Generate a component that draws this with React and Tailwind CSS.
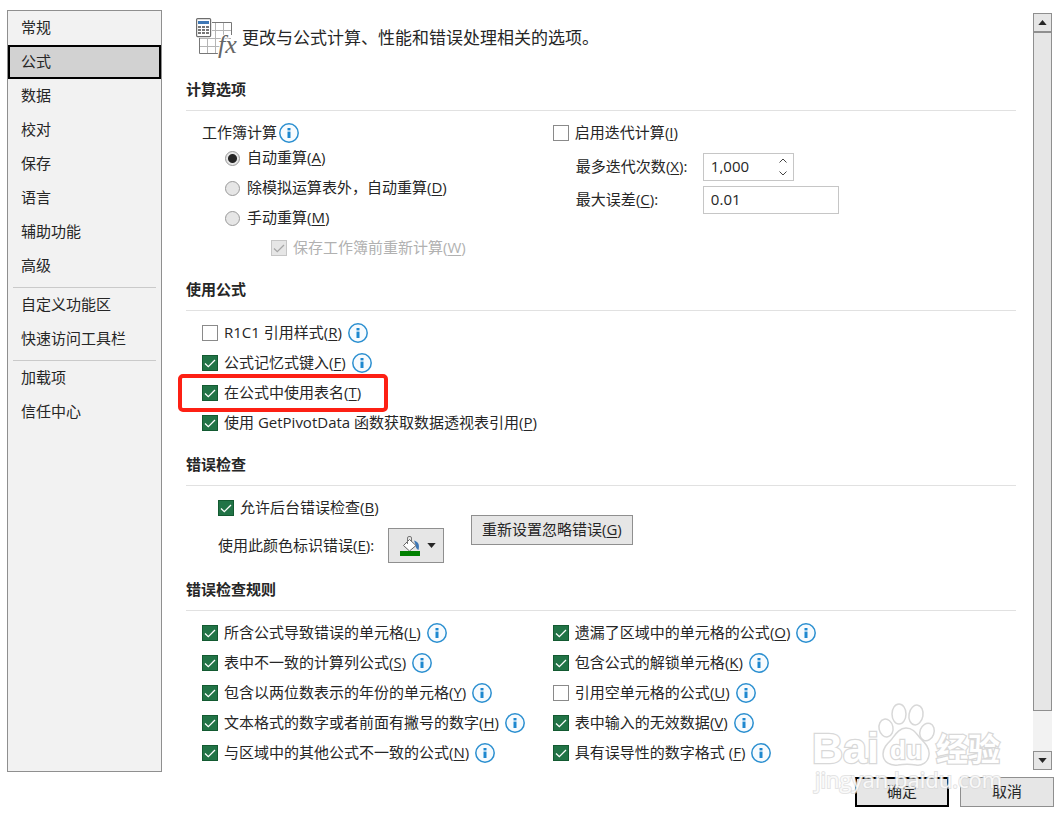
import { useState } from 'react';
import clsx from 'clsx';

const NAV_GROUPS = [
  ['常规', '公式', '数据', '校对', '保存', '语言', '辅助功能', '高级'],
  ['自定义功能区', '快速访问工具栏'],
  ['加载项', '信任中心'],
];

const CALC_MODES = [
  { id: 'auto', label: '自动重算', hotkey: 'A' },
  { id: 'auto-except', label: '除模拟运算表外，自动重算', hotkey: 'D' },
  { id: 'manual', label: '手动重算', hotkey: 'M' },
];

const FORMULA_OPTIONS = [
  { id: 'r1c1', label: 'R1C1 引用样式', hotkey: 'R', info: true },
  { id: 'autocomplete', label: '公式记忆式键入', hotkey: 'F', checked: true, info: true },
  { id: 'table-names', label: '在公式中使用表名', hotkey: 'T', checked: true, framed: true },
  { id: 'pivot', label: '使用 GetPivotData 函数获取数据透视表引用', hotkey: 'P', checked: true },
];

const RULES_LEFT = [
  { id: 'error-value', label: '所含公式导致错误的单元格', hotkey: 'L', checked: true, info: true },
  { id: 'column', label: '表中不一致的计算列公式', hotkey: 'S', checked: true, info: true },
  { id: 'years', label: '包含以两位数表示的年份的单元格', hotkey: 'Y', checked: true, info: true },
  { id: 'text-number', label: '文本格式的数字或者前面有撇号的数字', hotkey: 'H', checked: true, info: true },
  { id: 'region', label: '与区域中的其他公式不一致的公式', hotkey: 'N', checked: true, info: true },
];

const RULES_RIGHT = [
  { id: 'omitted', label: '遗漏了区域中的单元格的公式', hotkey: 'O', checked: true, info: true },
  { id: 'unlocked', label: '包含公式的解锁单元格', hotkey: 'K', checked: true, info: true },
  { id: 'empty', label: '引用空单元格的公式', hotkey: 'U', info: true },
  { id: 'invalid', label: '表中输入的无效数据', hotkey: 'V', checked: true, info: true },
  { id: 'misleading', label: '具有误导性的数字格式 ', hotkey: 'F', checked: true, info: true },
];

function Hotkey({ children }) {
  return (
    <>
      (<span className="underline underline-offset-2">{children}</span>)
    </>
  );
}

function InfoIcon() {
  return (
    <svg viewBox="0 0 20 20" className="size-5 shrink-0" aria-hidden="true">
      <circle cx="10" cy="10" r="9.2" fill="#f7fbfe" stroke="#2b8fd0" strokeWidth="1.5" />
      <rect x="8.5" y="5" width="3" height="2.4" fill="#1e88cf" />
      <rect x="8.5" y="8.6" width="3" height="6.4" fill="#1e88cf" />
    </svg>
  );
}

function Checkbox({ id, label, hotkey, checked = false, info, framed, disabled }) {
  return (
    <div className="relative flex h-[30px] w-fit items-center">
      <span className="grid shrink-0 place-items-center">
        <input
          id={id}
          type="checkbox"
          defaultChecked={checked}
          disabled={disabled}
          className="peer col-start-1 row-start-1 size-4 appearance-none border border-[#8a8a8a] bg-white checked:border-[#135a31] checked:bg-[#217346] disabled:border-[#c6c6c6] disabled:bg-[#e6e6e6]"
        />
        <svg
          viewBox="0 0 16 16"
          className={clsx(
            'pointer-events-none invisible col-start-1 row-start-1 size-4 peer-checked:visible',
            disabled ? 'text-[#a6a6a6]' : 'text-white',
          )}
          aria-hidden="true"
        >
          <path d="M3 8.5 6.3 11.6 13 5" fill="none" stroke="currentColor" strokeWidth="1.3" />
        </svg>
      </span>
      <label htmlFor={id} className={clsx('pb-[2px] pl-[6px] whitespace-pre', disabled && 'text-[#b1b1b1]')}>
        {label}
        <Hotkey>{hotkey}</Hotkey>
      </label>
      {info && (
        <span className="pl-[6px]">
          <InfoIcon />
        </span>
      )}
      {framed && (
        <span className="pointer-events-none absolute -inset-y-1 -right-[27px] -left-6 rounded-[5px] border-4 border-[#fd2014]" />
      )}
    </div>
  );
}

function Section({ title, children }) {
  return (
    <section className="mb-[7px] last:mb-0">
      <h2 className="mb-[7px] flex h-[41px] items-center border-b border-[#e1e1e1] pb-[2px] font-bold">{title}</h2>
      {children}
    </section>
  );
}

function HeaderIcon() {
  return (
    <svg viewBox="0 0 42 42" className="size-[42px] shrink-0" aria-hidden="true">
      <path d="M16 13.5h19M3 21.5h32M3 29.5h22M11.5 21v15M19.5 6v30M27.5 6v16" fill="none" stroke="#b5b5b5" />
      <path d="M16 5.5h19.5V18M3.5 21v15.5H22" fill="none" stroke="#777" />
      <rect x="0.6" y="1.6" width="14" height="18" rx="1" fill="#fff" stroke="#6d6d6d" strokeWidth="1.2" />
      <rect x="2" y="4" width="11" height="3" fill="#3f78b5" />
      <path d="M2 10h11M2 13h11M2 16h11" stroke="#777" strokeWidth="2" strokeDasharray="3 1" />
      <text
        x="22"
        y="36"
        fontSize="26"
        fontStyle="italic"
        fontFamily="Liberation Serif, serif"
        fill="#666"
        stroke="#fff"
        strokeWidth="2"
        paintOrder="stroke"
      >
        fx
      </text>
    </svg>
  );
}

function BucketIcon() {
  return (
    <svg viewBox="0 0 20 20" className="size-5" aria-hidden="true">
      <path d="M14 4.5c4 1 6 4 4.500 9.500-2.500-1-3-4-3.200-6z" fill="#3f78b5" />
      <path d="M9.500 3.500 16 9.500 9.500 15 3.500 9.500z" fill="#fff" stroke="#666" />
      <path d="M7.500 8V2q0-1.500 1.500-1.500h1q1.500 0 1.500 1.500v4" fill="none" stroke="#777" />
      <rect y="15" width="20" height="5" fill="#008000" />
    </svg>
  );
}

function Arrow({ up }) {
  return (
    <svg viewBox="0 0 10 6" className={clsx('h-[5px] w-[9px]', up && 'rotate-180')} aria-hidden="true">
      <path d="M0 0h10L5 6z" fill="#262626" />
    </svg>
  );
}

function Scrollbar() {
  return (
    <div className="mt-[3px] mr-[2px] mb-[2px] ml-[17px] flex w-[19px] shrink-0 flex-col bg-[#f2f2f2]">
      <button type="button" aria-label="向上滚动" className="grid h-[19px] place-items-center border border-[#8f8f8f] bg-[#e6e6e6]">
        <Arrow up />
      </button>
      <div className="flex-[17] border border-[#8f8f8f] bg-[#e6e6e6]" />
      <div className="flex-1" />
      <button type="button" aria-label="向下滚动" className="grid h-[19px] place-items-center border border-[#8f8f8f] bg-[#e6e6e6]">
        <Arrow />
      </button>
    </div>
  );
}

function Watermark() {
  return (
    <svg
      viewBox="0 0 200 104"
      className="pointer-events-none absolute right-[51px] bottom-4 h-[104px] w-[200px]"
      aria-hidden="true"
    >
      <g fill="#fff" stroke="#d8d8d8" strokeWidth="2.5" paintOrder="stroke" fontWeight="bold">
        <text x="2" y="66" fontSize="43" fontFamily="Liberation Sans, sans-serif">Bai</text>
        <text x="126" y="64" fontSize="32" fontFamily="Noto Sans CJK SC, sans-serif">经验</text>
      </g>
      <g fill="#fff" stroke="#d8d8d8" strokeWidth="1.5">
        <ellipse cx="76" cy="31" rx="7" ry="9" transform="rotate(-12 76 31)" />
        <ellipse cx="89" cy="17" rx="7" ry="10" />
        <ellipse cx="106" cy="18" rx="7" ry="10" transform="rotate(10 106 18)" />
        <ellipse cx="117" cy="35" rx="7" ry="9" transform="rotate(20 117 35)" />
        <path d="M96 31c7 0 10 5 14 10 5 5 10 10 9 17-1 8-8 11-13 10-6-1-12-1-18 0-8 1-15-3-15-11 0-6 4-10 8-14 4-5 8-12 15-12z" />
      </g>
      <text
        x="80"
        y="62"
        fontSize="26"
        fontWeight="bold"
        fontFamily="Liberation Sans, sans-serif"
        fill="#fff"
        stroke="#d8d8d8"
        strokeWidth="2.5"
        paintOrder="stroke"
      >
        du
      </text>
      <text
        x="5"
        y="91"
        fontSize="22"
        fontFamily="Open Sans, sans-serif"
        fill="#fff"
        fillOpacity="0.85"
        stroke="#d8d8d8"
        strokeOpacity="0.7"
        strokeWidth="2"
        paintOrder="stroke"
      >
        jingyan.baidu.com
      </text>
    </svg>
  );
}

export default function App() {
  const [page, setPage] = useState('公式');
  const [mode, setMode] = useState('auto');

  return (
    <div className="relative bg-white px-[7px] py-[10px] font-['Open_Sans','Noto_Sans_CJK_SC',sans-serif] text-[15px] leading-5 text-[#262626]">
      <div className="flex">
        <nav className="w-[155px] shrink-0 border border-[#8f8f8f] bg-[#f2f2f2]">
          {NAV_GROUPS.map((items, i) => (
            <div key={items[0]}>
              {i > 0 && <hr className="mx-[5px] mt-1 border-[#cacaca]" />}
              {items.map((item) => (
                <button
                  key={item}
                  type="button"
                  onClick={() => setPage(item)}
                  className={clsx(
                    'block h-[34px] w-full border-2 pb-[2px] pl-[11px] text-left',
                    page === item ? 'border-black bg-[#d2d2d2]' : 'border-transparent',
                  )}
                >
                  {item}
                </button>
              ))}
            </div>
          ))}
        </nav>

        <main className="min-w-0 flex-1 pb-1 pl-6">
          <header className="flex h-[60px] items-center gap-1 pb-1 pl-[10px]">
            <HeaderIcon />
            <h1 className="text-[17px]">更改与公式计算、性能和错误处理相关的选项。</h1>
          </header>

          <Section title="计算选项">
            <div className="grid grid-cols-[25fr_33fr] pl-4">
              <fieldset>
                <legend className="flex h-[25px] items-end gap-[2px]">
                  <span className="pb-px">工作簿计算</span>
                  <InfoIcon />
                </legend>
                {CALC_MODES.map((m) => (
                  <div key={m.id} className="flex h-[30px] items-center gap-[7px] pl-[23px]">
                    <input
                      id={m.id}
                      type="radio"
                      name="calc-mode"
                      checked={mode === m.id}
                      onChange={() => setMode(m.id)}
                      className="size-[15px] shrink-0 appearance-none rounded-full border border-[#9a9a9a] bg-[#e6e6e6] checked:bg-[radial-gradient(circle,#262626_4px,#e6e6e6_5px)]"
                    />
                    <label htmlFor={m.id} className="pb-[2px]">
                      {m.label}
                      <Hotkey>{m.hotkey}</Hotkey>
                    </label>
                  </div>
                ))}
                <div className="pl-[69px]">
                  <Checkbox id="recalc-save" label="保存工作簿前重新计算" hotkey="W" checked disabled />
                </div>
              </fieldset>
              <div>
                <Checkbox id="iterate" label="启用迭代计算" hotkey="I" />
                <div className="mt-[5px] flex items-center pl-[23px]">
                  <label htmlFor="max-iterations" className="w-[127px] pb-[2px]">
                    最多迭代次数
                    <Hotkey>X</Hotkey>:
                  </label>
                  <div className="flex h-7 w-[91px] border border-[#c6c6c6]">
                    <input
                      id="max-iterations"
                      defaultValue="1,000"
                      className="min-w-0 flex-1 pb-[2px] pl-[7px] outline-none"
                    />
                    <div className="flex w-5 flex-col">
                      <button type="button" aria-label="增加" className="grid flex-1 place-items-center">
                        <svg viewBox="0 0 8 5" className="h-[5px] w-2">
                          <path d="M0.5 4.5 4 1l3.5 3.5" fill="none" stroke="#444" />
                        </svg>
                      </button>
                      <button type="button" aria-label="减少" className="grid flex-1 place-items-center">
                        <svg viewBox="0 0 8 5" className="h-[5px] w-2">
                          <path d="M0.5 0.5 4 4 7.5 0.5" fill="none" stroke="#444" />
                        </svg>
                      </button>
                    </div>
                  </div>
                </div>
                <div className="mt-[5px] flex items-center pl-[23px]">
                  <label htmlFor="max-change" className="w-[127px] pb-[2px]">
                    最大误差
                    <Hotkey>C</Hotkey>:
                  </label>
                  <input
                    id="max-change"
                    defaultValue="0.01"
                    className="h-7 w-[136px] border border-[#c6c6c6] pb-[2px] pl-[7px] outline-none"
                  />
                </div>
              </div>
            </div>
          </Section>

          <Section title="使用公式">
            <div className="pl-4">
              {FORMULA_OPTIONS.map((o) => (
                <Checkbox key={o.id} {...o} />
              ))}
            </div>
          </Section>

          <Section title="错误检查">
            <div className="flex items-start gap-[27px] pl-8">
              <div>
                <Checkbox id="background" label="允许后台错误检查" hotkey="B" checked />
                <div className="flex items-center pt-[5px]">
                  <label htmlFor="error-color" className="w-[170px] pb-[2px]">
                    使用此颜色标识错误
                    <Hotkey>E</Hotkey>:
                  </label>
                  <button
                    id="error-color"
                    type="button"
                    className="flex h-[35px] w-14 items-center justify-center gap-[7px] border border-[#8f8f8f] bg-[#e6e6e6] pl-[3px]"
                  >
                    <BucketIcon />
                    <Arrow />
                  </button>
                </div>
              </div>
              <button type="button" className="mt-[22px] h-[30px] border border-[#8f8f8f] bg-[#e6e6e6] px-[10px] pb-[2px]">
                重新设置忽略错误
                <Hotkey>G</Hotkey>
              </button>
            </div>
          </Section>

          <Section title="错误检查规则">
            <div className="grid grid-cols-[25fr_33fr] pl-4">
              <div>
                {RULES_LEFT.map((o) => (
                  <Checkbox key={o.id} {...o} />
                ))}
              </div>
              <div>
                {RULES_RIGHT.map((o) => (
                  <Checkbox key={o.id} {...o} />
                ))}
              </div>
            </div>
          </Section>
        </main>

        <Scrollbar />
      </div>

      <footer className="mt-[5px] flex justify-end gap-[11px]">
        <button type="button" className="h-[30px] w-[94px] border-2 border-black bg-[#e6e6e6] pb-[2px]">
          确定
        </button>
        <button type="button" className="h-[30px] w-[94px] border border-[#8f8f8f] bg-[#e6e6e6] pb-[2px]">
          取消
        </button>
      </footer>

      <Watermark />
    </div>
  );
}
